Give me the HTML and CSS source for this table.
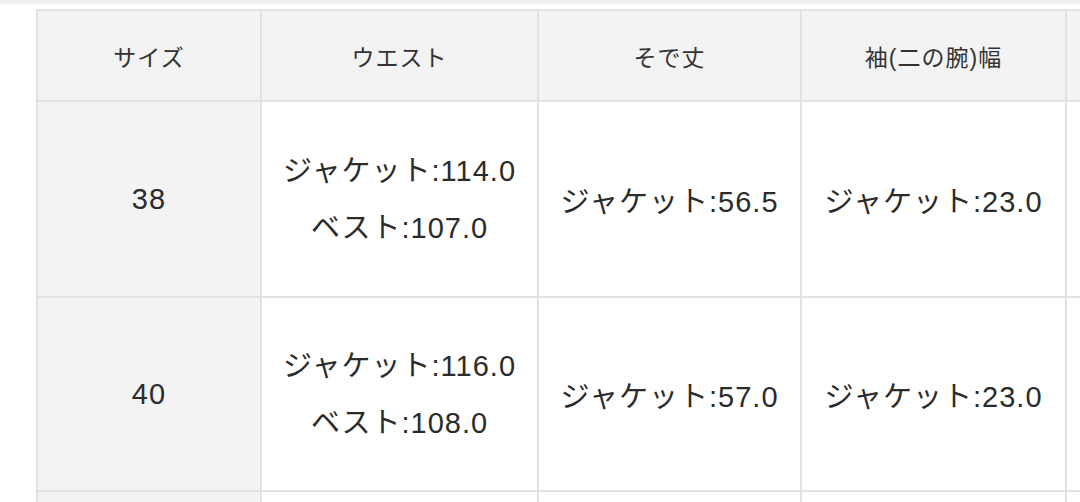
FILE: index.html
```html
<!DOCTYPE html>
<html lang="ja">
<head>
<meta charset="utf-8">
<link rel="stylesheet" href="styles.css">
</head>
<body>
<div class="topbar"></div>
<div class="wrap">
<table class="size-table">
<colgroup>
<col class="c1"><col class="c2"><col class="c3"><col class="c4"><col class="c5">
</colgroup>
<thead>
<tr class="head"><th>サイズ</th><th>ウエスト</th><th>そで丈</th><th>袖(二の腕)幅</th><th></th></tr>
</thead>
<tbody>
<tr class="r1"><td class="size">38</td><td><div class="ln">ジャケット:114.0</div><div class="ln">ベスト:107.0</div></td><td>ジャケット:56.5</td><td>ジャケット:23.0</td><td></td></tr>
<tr class="r2"><td class="size">40</td><td><div class="ln">ジャケット:116.0</div><div class="ln">ベスト:108.0</div></td><td>ジャケット:57.0</td><td>ジャケット:23.0</td><td></td></tr>
<tr class="r3"><td class="size"></td><td></td><td></td><td></td><td></td></tr>
</tbody>
</table>
</div>
</body>
</html>
```
FILE: styles.css
```css
html, body {
  margin: 0;
  padding: 0;
  background: #ffffff;
  overflow: hidden;
}
body {
  width: 1080px;
  height: 502px;
  font-family: "Liberation Sans", "Noto Sans CJK JP", sans-serif;
  color: #2b2b2b;
}
.topbar {
  height: 4px;
  background: #f1f1f3;
}
.wrap {
  margin: 5px 0 0 36px;
  width: 1044px;
  height: 493px;
  overflow: hidden;
}
.size-table {
  border-collapse: collapse;
  table-layout: fixed;
  width: 1130px;
}
.c1 { width: 224px; }
.c2 { width: 277px; }
.c3 { width: 263px; }
.c4 { width: 265px; }
.c5 { width: 101px; }
.size-table th,
.size-table td {
  border: 2px solid #e0e2e8;
  text-align: center;
  vertical-align: middle;
  padding: 0;
}
.size-table th {
  background: #f3f3f3;
  font-weight: normal;
  font-size: 23px;
  letter-spacing: 1px;
  height: 89px;
  color: #333;
}
.size-table td {
  font-size: 29px;
  letter-spacing: 1px;
  background: #fff;
}
.size-table td.size {
  background: #f3f3f3;
}
.r1 td { height: 194px; }
.r2 td { height: 192px; }
.r3 td { height: 40px; }
.ln {
  line-height: 57px;
}
.r1 .ln:first-child,
.r2 .ln:first-child {
  margin-top: 2px;
}
```
